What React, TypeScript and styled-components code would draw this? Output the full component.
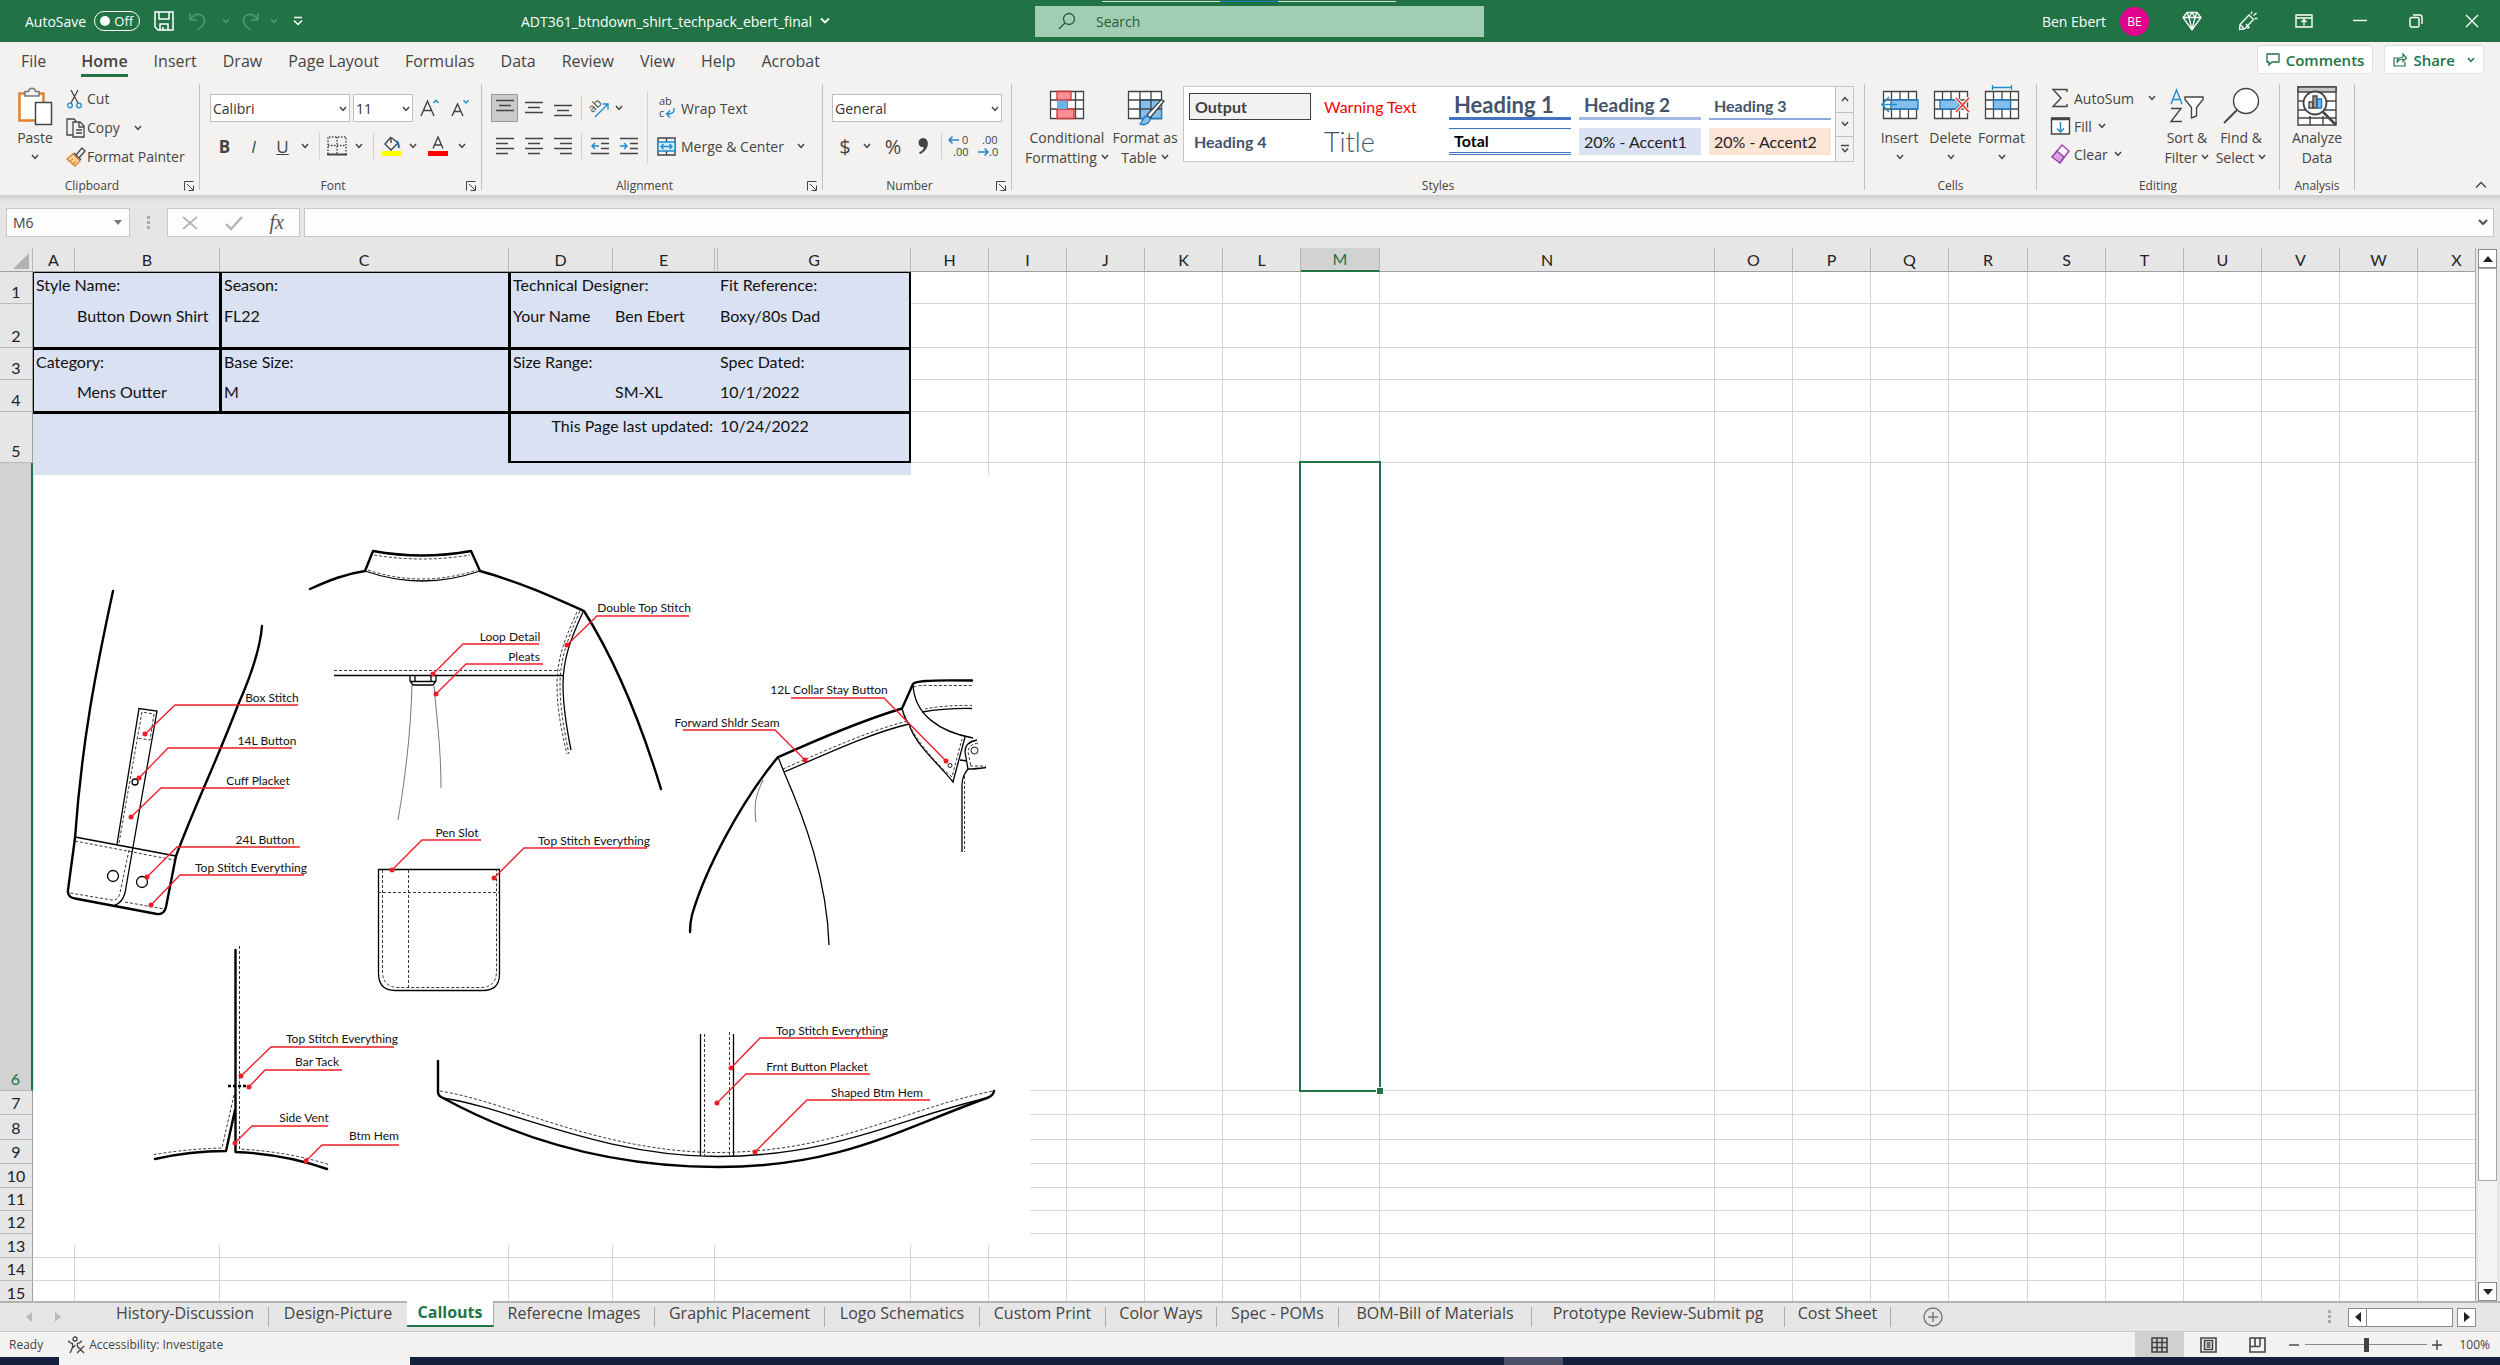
import React from "react";
import styled, { createGlobalStyle, css } from "styled-components";

const GREEN = "#217346";
const UI = '"Open Sans", "Noto Sans", sans-serif';
const CELL = 'Lato, "Open Sans", sans-serif';

const Global = createGlobalStyle`
  * { box-sizing: border-box; }
  body { margin: 0; font-family: ${UI}; font-size: 14px; color: #444; background: #e6e6e6; overflow: hidden; }
  button, input, select { font: inherit; color: inherit; margin: 0; }
  button { border: 0; padding: 0; background: none; cursor: pointer; }
  svg { display: block; flex: none; overflow: visible; }
`;

/* ---------- icon primitives ---------- */

type IconProps = { w?: number; h?: number; children: React.ReactNode; color?: string; sw?: number };
const Icon = ({ w = 20, h = 20, children, color = "#444", sw = 1.4 }: IconProps) => (
  <svg width={w} height={h} viewBox={`0 0 ${w} ${h}`} fill="none" stroke={color} strokeWidth={sw} aria-hidden="true">
    {children}
  </svg>
);
const Chevron = ({ up = false, color = "#444" }: { up?: boolean; color?: string }) => (
  <Icon w={8} h={6} color={color} sw={1.5}>
    <path d={up ? "M1 5l3-3.4L7 5" : "M1 1l3 3.4L7 1"} />
  </Icon>
);

/* ---------- title bar ---------- */

const AppFrame = styled.div`
  display: flex;
  flex-direction: column;
  height: 100vh;
`;
const TitleBar = styled.header`
  display: grid;
  grid-template-columns: 521px 514px 449px 1fr;
  align-items: center;
  height: 42px;
  background: ${GREEN};
  color: #fff;
`;
const QuickAccess = styled.div`
  display: flex;
  align-items: center;
  padding-left: 25px;
`;
const AutoSave = styled.label`
  display: flex;
  align-items: center;
  gap: 8px;
  margin-right: 14px;
`;
const Pill = styled.span`
  display: flex;
  align-items: center;
  justify-content: space-between;
  width: 46px;
  height: 20px;
  padding: 0 6px 0 5px;
  border: 1px solid #fff;
  border-radius: 10px;
  font-size: 13px;
`;
const Knob = styled.input`
  appearance: none;
  width: 10px;
  height: 10px;
  border-radius: 50%;
  background: #fff;
`;
const BarButton = styled.button<{ $w: number }>`
  display: flex;
  align-items: center;
  justify-content: center;
  width: ${(p) => p.$w}px;
  height: 30px;
`;
const DocTitle = styled.button`
  display: flex;
  align-items: center;
  justify-self: start;
  gap: 8px;
`;
const Search = styled.label`
  position: relative;
  display: flex;
  align-items: center;
  gap: 18px;
  height: 31px;
  padding-left: 23px;
  background: #a0cdb4;
  color: #1e5c3a;
  input {
    flex: 1;
    border: 0;
    outline: 0;
    background: none;
  }
  input::placeholder { color: #1e5c3a; opacity: 1; }
`;
const SnapHint = styled.i`
  position: absolute;
  top: -5px;
  left: 67px;
  width: 294px;
  height: 1px;
  background: linear-gradient(90deg, #cfe3d7 118px, #0b79c9 118px 176px, #cfe3d7 176px);
`;
const Account = styled.div`
  display: flex;
  align-items: center;
  justify-content: flex-end;
`;
const Avatar = styled.span`
  display: grid;
  place-items: center;
  width: 29px;
  height: 29px;
  margin: 0 14px;
  border-radius: 50%;
  background: #e3008c;
  font-size: 12px;
`;

/* ---------- ribbon ---------- */

const TabRow = styled.nav`
  display: flex;
  align-items: flex-start;
  height: 42px;
  padding: 3px 16px 0 8px;
  background: #f3f2f1;
`;
const RibbonTab = styled.button<{ $active?: boolean; $file?: boolean }>`
  height: 32px;
  margin: 0 13px;
  margin-right: ${(p) => (p.$file ? 22 : 13)}px;
  padding-top: 2px;
  font-size: 16px;
  line-height: 26px;
  border-bottom: 3px solid ${(p) => (p.$active ? GREEN : "transparent")};
  font-weight: ${(p) => (p.$active ? 600 : 400)};
`;
const Spacer = styled.span`
  flex: 1;
`;
const PillButton = styled.button`
  display: flex;
  align-items: center;
  gap: 6px;
  height: 29px;
  margin-left: 11px;
  padding: 0 8px;
  border: 1px solid #e1dfdd;
  border-radius: 3px;
  background: #fff;
  color: ${GREEN};
  font-size: 15px;
  font-weight: 600;
  svg:last-child { margin-left: 6px; }
  svg:first-child { margin-left: 0; }
`;
const Ribbon = styled.div`
  display: flex;
  height: 111px;
  background: #f3f2f1;
`;
const Group = styled.section<{ $w: number }>`
  display: flex;
  flex: none;
  flex-direction: column;
  width: ${(p) => p.$w}px;
  height: 111px;
  padding-right: 1px;
  background: linear-gradient(#c1bfbd, #c1bfbd) right top / 1px 106px no-repeat;
`;
const GroupBody = styled.div<{ $pad?: number }>`
  display: flex;
  height: 93px;
  padding-left: ${(p) => p.$pad ?? 0}px;
`;
const GroupFoot = styled.div`
  display: flex;
  align-items: center;
  height: 18px;
  font-size: 12px;
  line-height: 16px;
  h2 {
    flex: 1;
    margin: 0;
    font: inherit;
    text-align: center;
  }
  button {
    width: 12px;
    margin-right: 3px;
  }
`;
const BigButton = styled.button<{ $w: number }>`
  display: grid;
  grid-template-rows: 43px 20px 20px;
  justify-items: center;
  align-items: center;
  align-content: start;
  width: ${(p) => p.$w}px;
  white-space: nowrap;
  span {
    display: flex;
    align-items: center;
    gap: 4px;
  }
  > svg:first-child { align-self: start; }
`;
const List = styled.div<{ $w: number; $row: number }>`
  display: grid;
  grid-auto-rows: ${(p) => p.$row}px;
  width: ${(p) => p.$w}px;
`;
const ListButton = styled.button<{ $gap?: number; $slot?: number }>`
  display: grid;
  grid-template-columns: ${(p) => p.$slot ?? 21}px auto auto 1fr;
  align-items: center;
  justify-items: start;
  white-space: nowrap;
  svg + span { margin-right: ${(p) => p.$gap ?? 6}px; }
`;
const Rows = styled.div`
  display: flex;
  flex-direction: column;
  gap: 10px;
  padding-top: 10px;
`;
const Row = styled.div`
  display: flex;
  align-items: center;
  height: 28px;
`;
const Tool = styled.button<{ $w: number; $on?: boolean; $big?: boolean }>`
  display: flex;
  align-items: center;
  justify-content: center;
  width: ${(p) => p.$w}px;
  height: 28px;
  font-size: ${(p) => (p.$big ? 20 : 17)}px;
  ${(p) =>
    p.$on &&
    css`
      background: #cdcbc9;
      border: 1px solid #9a9896;
    `}
`;
const Rule = styled.i<{ $w: number }>`
  width: ${(p) => p.$w}px;
  height: 26px;
  background: linear-gradient(#d2d0ce, #d2d0ce) center / 1px 100% no-repeat;
`;
const LongRule = styled.i`
  width: 1px;
  height: 72px;
  margin: 7px 9px 0 4px;
  background: #d2d0ce;
`;
const TextTool = styled.button`
  display: flex;
  align-items: center;
  gap: 5px;
  height: 28px;
  white-space: nowrap;
  svg:last-child:not(:first-child) { margin-left: 8px; }
`;
const SelectBox = styled.span<{ $w: number }>`
  position: relative;
  width: ${(p) => p.$w}px;
  height: 28px;
  margin-right: 3px;
  select {
    appearance: none;
    width: 100%;
    height: 100%;
    padding: 0 2px;
    border: 1px solid #c1bfbd;
    background: #fff;
    color: #333;
  }
  svg {
    position: absolute;
    right: 3px;
    top: 12px;
  }
`;

const Gallery = styled.div`
  display: grid;
  grid-template-columns: 651px 18px;
  height: 76px;
  margin-top: 2px;
  border: 1px solid #c8c6c4;
  background: #fff;
`;
const StyleGrid = styled.div`
  display: grid;
  grid-template-columns: repeat(5, 122px);
  grid-template-rows: 27px 27px;
  gap: 8px;
  padding: 6px 5px;
`;
type SwatchProps = { $size?: number; $color?: string; $weight?: number; $bg?: string; $edge?: string };
const Swatch = styled.button<SwatchProps>`
  padding: 0 5px;
  text-align: left;
  line-height: 20px;
  white-space: nowrap;
  font-family: ${CELL};
  font-size: ${(p) => p.$size ?? 16}px;
  font-weight: ${(p) => p.$weight ?? 400};
  color: ${(p) => p.$color ?? "#222"};
  background: ${(p) => p.$bg ?? "none"};
  ${(p) => p.$edge};
`;
const GalleryScroll = styled.div`
  display: grid;
  grid-template-rows: 1fr 1fr 1fr;
  button {
    display: grid;
    place-items: center;
    border-left: 1px solid #c1bfbd;
    background: #f3f2f1;
  }
  button + button { border-top: 1px solid #c1bfbd; }
`;
const Collapse = styled.button`
  align-self: flex-end;
  margin: 0 13px 6px auto;
`;

/* ---------- formula bar ---------- */

const FormulaRow = styled.div`
  display: flex;
  height: 53px;
  padding: 13px 6px 11px;
  background: linear-gradient(#cfcdcb, #e6e6e6 7px);
`;
const NameBox = styled.div`
  display: flex;
  align-items: center;
  width: 124px;
  padding-right: 7px;
  border: 1px solid #c6c6c6;
  background: #fdfdfd;
  input {
    flex: 1;
    min-width: 0;
    padding: 0 6px;
    border: 0;
    background: none;
  }
`;
const Grip = styled.i`
  align-self: center;
  width: 3px;
  height: 14px;
  margin: 0 17px;
  background: repeating-linear-gradient(#aaa 0 3px, transparent 3px 5px);
`;
const FormulaTools = styled.div`
  display: flex;
  align-items: center;
  justify-content: space-between;
  width: 133px;
  margin-right: 4px;
  padding: 0 15px 0 14px;
  border: 1px solid #c6c6c6;
  background: #fdfdfd;
`;
const Fx = styled.span`
  font: italic 20px "Liberation Serif", serif;
  color: #555;
`;
const FormulaInput = styled.div`
  display: flex;
  flex: 1;
  align-items: center;
  padding-right: 5px;
  border: 1px solid #c6c6c6;
  background: #fdfdfd;
  input {
    flex: 1;
    border: 0;
    background: none;
  }
`;

/* ---------- sheet ---------- */

const SheetArea = styled.main`
  display: flex;
  flex: 1;
  min-height: 0;
  border-bottom: 2px solid #b2b2b2;
`;
const GridPane = styled.div`
  position: relative;
  flex: 1;
  min-width: 0;
  overflow: hidden;
  border-right: 1px solid #ababab;
  background: #fff;
`;
const Sheet = styled.table`
  width: 2496px;
  table-layout: fixed;
  border-collapse: separate;
  border-spacing: 0;
  font-family: ${CELL};
  font-size: 16px;
  line-height: 24px;
  color: #111;
`;
const ColHead = styled.th<{ $sel?: boolean }>`
  height: 24px;
  padding: 0;
  font-weight: 400;
  line-height: 20px;
  color: ${(p) => (p.$sel ? GREEN : "#222")};
  background: ${(p) => (p.$sel ? "#d2d2d2" : "#e6e6e6")};
  border-right: 1px solid #b8b8b8;
  border-bottom: ${(p) => (p.$sel ? `2px solid ${GREEN}` : "1px solid #9f9f9f")};
`;
const RowHead = styled.th<{ $sel?: boolean }>`
  padding: 0;
  vertical-align: bottom;
  font-weight: 400;
  line-height: 22px;
  color: ${(p) => (p.$sel ? GREEN : "#222")};
  background: ${(p) => (p.$sel ? "#d2d2d2" : "#e6e6e6")};
  border-bottom: 1px solid #b8b8b8;
  border-right: ${(p) => (p.$sel ? `2px solid ${GREEN}` : "1px solid #9f9f9f")};
`;
const Line = styled.tr<{ $h: number }>`
  height: ${(p) => p.$h}px;
`;
/* Heavy rules straddle the cell boundary: 1px on the leading cell, 2px on the following one.
   Edge letters: lower case for those shared rules, upper case for the outer frame. */
type CellProps = { $fill?: boolean; $b?: string; $right?: boolean; $plain?: boolean };
const Cell = styled.td<CellProps>`
  padding: 0 2px;
  vertical-align: top;
  white-space: nowrap;
  text-align: ${(p) => (p.$right ? "right" : "left")};
  border: 0 solid #000;
  ${(p) =>
    p.$fill
      ? css`background: #d9e1f2;`
      : css`border-color: #d6d6d6; border-bottom-width: 1px; border-right-width: ${p.$plain ? 0 : 1}px;`}
  ${(p) => p.$b?.includes("t") && "border-top-width: 2px;"}
  ${(p) => p.$b?.includes("T") && "border-top-width: 1px;"}
  ${(p) => p.$b?.includes("b") && "border-bottom-width: 1px;"}
  ${(p) => p.$b?.includes("B") && "border-bottom-width: 2px;"}
  ${(p) => p.$b?.includes("r") && "border-right-width: 1px;"}
  ${(p) => p.$b?.includes("R") && "border-right-width: 2px;"}
  ${(p) => p.$b?.includes("l") && "border-left-width: 2px;"}
  ${(p) => p.$b?.includes("L") && "border-left-width: 1px;"}
`;
const Selected = styled(Cell)`
  position: relative;
  &::before {
    content: "";
    position: absolute;
    inset: -2px -2px -2px -2px;
    border: 2px solid ${GREEN};
  }
  &::after {
    content: "";
    position: absolute;
    right: -4px;
    bottom: -4px;
    width: 6px;
    height: 6px;
    background: ${GREEN};
    border: solid #fff;
    border-width: 1px 0 0 1px;
  }
`;
const Sketch = styled.svg`
  position: absolute;
  left: 34px;
  top: 227px;
  background: #fff;
`;
const Leader = styled.g`
  polyline { fill: none; stroke: #ee1c25; stroke-width: 1.3; }
  circle { fill: #ee1c25; stroke: none; }
  text { font-family: ${CELL}; font-size: 12px; fill: #111; stroke: none; }
`;

const VScroll = styled.div`
  display: flex;
  flex-direction: column;
  width: 24px;
  padding: 1px 3px 0 2px;
  background: #e6e6e6;
`;
const ScrollButton = styled.button`
  display: grid;
  place-items: center;
  width: 19px;
  height: 19px;
  border: 1px solid #8a8a8a;
  background: #fff;
`;
const VTrack = styled.div`
  flex: 1;
  background: #f3f3f3;
`;
const VThumb = styled.div`
  height: 90%;
  border: 1px solid #a6a6a6;
  background: #fff;
`;

/* ---------- sheet tabs and status ---------- */

const TabStrip = styled.div`
  display: flex;
  align-items: center;
  height: 28px;
  background: #e6e6e6;
`;
const TabNav = styled.div`
  display: flex;
  align-self: stretch;
  align-items: center;
  gap: 23px;
  width: 102px;
  padding-left: 26px;
`;
const SheetTab = styled.button<{ $w: number; $active?: boolean }>`
  flex: none;
  width: ${(p) => p.$w}px;
  height: 20px;
  font-size: 16px;
  line-height: 12px;
  padding-bottom: 8px;
  white-space: nowrap;
  border-right: 1px solid #ababab;
  ${(p) =>
    p.$active &&
    css`
      align-self: flex-start;
      height: 26px;
      margin: -2px 0 0 -1px;
      padding-bottom: 2px;
      background: #fff;
      color: ${GREEN};
      font-weight: 700;
      border-bottom: 2px solid ${GREEN};
    `}
`;
const AddSheet = styled.button`
  margin-left: 32px;
`;
const HScroll = styled.div`
  display: flex;
  align-items: center;
  margin-right: 24px;
`;
const HThumb = styled.div`
  width: 86px;
  height: 19px;
  margin-right: 4px;
  border: 1px solid #8a8a8a;
  border-left: 0;
  background: #fff;
`;
const Status = styled.footer`
  display: flex;
  align-items: center;
  height: 26px;
  padding-left: 9px;
  border-top: 1px solid #c8c8c8;
  background: #f3f2f1;
  font-size: 12px;
`;
const Access = styled.button`
  display: flex;
  align-items: center;
  gap: 4px;
  margin-left: 24px;
`;
const ViewButton = styled.button<{ $on?: boolean }>`
  display: grid;
  place-items: center;
  width: 49px;
  height: 25px;
  background: ${(p) => (p.$on ? "#d2d0ce" : "none")};
`;
const ZoomOut = styled.button`
  margin-left: 6px;
`;
const Zoom = styled.input`
  appearance: none;
  width: 122px;
  height: 15px;
  background: linear-gradient(#8a8886, #8a8886) center / 100% 1px no-repeat;
  && { margin: 0 5px; }
  &::-webkit-slider-thumb {
    appearance: none;
    width: 5px;
    height: 14px;
    background: #444;
  }
`;
const ZoomValue = styled.output`
  width: 58px;
  padding: 0 10px 0 12px;
  text-align: right;
`;
const Taskbar = styled.div`
  height: 8px;
  background: linear-gradient(90deg, transparent 59px, #f3f3f3 59px 410px, transparent 410px 1504px, #4b5068 1504px 1563px, transparent 1563px), #141f3d;
`;

/* ---------- drawing ---------- */

const CALLOUTS: [string, number, number, number, number, number, number, number][] = [
  // label, dot x, dot y, elbow x, line y, line end, text centre, baseline
  ["Box Stitch", 145, 734, 175, 705, 298, 272, 702],
  ["14L Button", 139, 778, 168, 748, 292, 267, 745],
  ["Cuff Placket", 131, 817, 161, 788, 284, 258, 785],
  ["24L Button", 147, 877, 177, 847, 300, 265, 844],
  ["Top Stitch Everything", 151, 905, 180, 875, 304, 251, 872],
  ["Loop Detail", 433, 674, 463, 644, 539, 510, 641],
  ["Pleats", 436, 694, 466, 664, 543, 524, 661],
  ["Double Top Stitch", 567, 645, 597, 616, 689, 644, 612],
  ["Pen Slot", 392, 870, 422, 840, 481, 457, 837],
  ["Top Stitch Everything", 494, 878, 524, 848, 647, 594, 845],
  ["12L Collar Stay Button", 946, 761, 884, 698, 791, 829, 694],
  ["Forward Shldr Seam", 805, 760, 775, 730, 683, 727, 727],
  ["Top Stitch Everything", 241, 1076, 271, 1047, 394, 342, 1043],
  ["Bar Tack", 249, 1087, 265, 1070, 342, 317, 1066],
  ["Side Vent", 235, 1143, 252, 1126, 328, 304, 1122],
  ["Btm Hem", 306, 1161, 322, 1145, 399, 374, 1140],
  ["Top Stitch Everything", 731, 1068, 760, 1038, 884, 832, 1035],
  ["Frnt Button Placket", 717, 1103, 746, 1074, 870, 817, 1071],
  ["Shaped Btm Hem", 755, 1152, 807, 1100, 930, 877, 1097],
];

const ShirtSketch = () => (
  <Sketch width="996" height="770" viewBox="34 475 996 770" role="img" aria-label="Shirt construction callouts">
    {/* heavy outlines */}
    <g fill="none" stroke="#000" strokeWidth="2.4" strokeLinejoin="round" strokeLinecap="round">
      <path d="M113 591C96 670 82 740 75 838L68 890Q67 897 75 898.500L157 914Q164 915 166 907L176 856" />
      <path d="M262 626C260 650 250 678 238 705C215 765 195 805 176 856" />
      <path d="M310 589C330 580 345 574 365 571L373 551Q422 560 471 551L480 571C520 582 555 598 584 611C615 660 640 720 661 789" />
      <path d="M972 680.500Q935 680 925 681Q914 682 913 684L902 708.500C850 724 800 748 778 757C740 803 705 870 692 915Q690 923 690 932" />
      <path d="M235.500 950V1152Q285 1154 327 1169M235 1110L226 1151Q190 1151 155 1159" />
      <path d="M438 1061V1092Q438 1096 443 1098C500 1129 590 1167 718 1167C840 1167 900 1129 987 1098Q993 1096 994 1091" />
    </g>
    {/* seams */}
    <g fill="none" stroke="#000" strokeWidth="1.300">
      <path d="M75 837L176 856M117 844L139 708.500L157 711L133 847L125 893Q122 903 115 905" />
      <circle cx="113" cy="876" r="5.500" />
      <circle cx="142" cy="882" r="5.500" />
      <circle cx="135" cy="782" r="3" />
      <path d="M365 571Q422 591 480 571M334 675.500H563" />
      <path d="M583 612C570 640 563 660 563 685C563 705 566 725 571 750" />
      <path d="M410 675V681L413 685H433L436 681V675M415 675V681M431 675V681M410 681.500H436" />
      <path d="M378.500 869.500H499.500V974Q499.500 990.500 483 990.500H395Q378.500 990.500 378.500 973Z" />
      <path d="M778 757L784 772C805 820 827 880 829 945M784 772C820 757 870 733 909 724" />
      <path d="M902 708.500Q905 720 909 724C915 745 940 765 953 782L965 737M913 684C914 715 940 732 973 738" />
      <path d="M922 712Q945 708 972 708.500M960 760L967 761M977 740Q965 742 965 752L968 769Q975 769 986 767.500" />
      <path d="M968 769Q962 776 962 785V852" />
      <circle cx="974.500" cy="750.500" r="3.500" strokeWidth="0.900" />
      <circle cx="950" cy="765.500" r="2" strokeWidth="0.900" />
      <path d="M443 1098C510 1108 600 1156 718 1156.500C836 1156 900 1118 987 1098M700.500 1034V1156M733.500 1034V1156" />
    </g>
    {/* fabric folds */}
    <g fill="none" stroke="#777" strokeWidth="1">
      <path d="M412 685C411 730 405 780 398 820M434 686C437 720 441 750 441 788M763 780C755 797 754 805 756 822" />
    </g>
    {/* stitching */}
    <g fill="none" stroke="#222" strokeWidth="0.900" strokeDasharray="3 2">
      <path d="M75 841L174 860M119 843L142 712L154 714L150 740L137 738M129 850L120 893Q118 901 112 900L70 893M125 902L164 909" />
      <path d="M374 555Q422 563 470 555M368 570Q422 588 477 570M334 670.500H560" />
      <path d="M580 611C567 640 560 660 560 685C560 705 563 725 569 754M577 612C564 640 557 660 557 685C557 705 560 725 567 754" />
      <path d="M382.500 870V972Q383 986.500 397 987.500H482Q496 986.500 496.500 972V870M378 892.500H499M408.500 870V990" />
      <path d="M783 769C820 753 870 730 908 721M903 711C912 735 930 758 952 777L962 739M925 709Q945 705 972 705.500M914 687Q918 685 930 685.500H972" />
      <path d="M964.500 776V852M970 766H986M978 743Q968 745 968 752L971 766" />
      <path d="M239.500 946V1149Q290 1152 330 1165M234 1095L222 1148Q185 1149 152 1155" />
      <path d="M440 1091C510 1102 600 1152 718 1152.500C836 1152 900 1110 993 1091M704.500 1034V1156M729.500 1032V1156" />
    </g>
    <path d="M228 1086H248" stroke="#000" strokeWidth="2.400" strokeDasharray="3 2" />
    {CALLOUTS.map(([label, dx, dy, ex, ly, end, tx, ty], i) => (
      <Leader key={i}>
        <polyline points={`${dx},${dy} ${ex},${ly} ${end},${ly}`} />
        <circle cx={dx} cy={dy} r="2.500" />
        <text x={tx} y={ty} textAnchor="middle">{label}</text>
      </Leader>
    ))}
  </Sketch>
);

/* ---------- ribbon icons ---------- */

const Launcher = () => (
  <button aria-label="More options">
    <Icon w={10} h={10} sw={1}><path d="M.500 9.500V.500H9.500M3 3l6 6M9.500 4.500v5h-5" /></Icon>
  </button>
);
const AlignLines = ({ widths, top = 0 }: { widths: number[]; top?: number }) => (
  <Icon w={18} h={18} sw={1.5}>
    {widths.map((n, i) => <path key={i} d={`M${(18 - n) / 2} ${top + 1.500 + i * 5}h${n}`} />)}
  </Icon>
);
const TextLines = ({ side }: { side: "l" | "c" | "r" }) => (
  <Icon w={18} h={18} sw={1.5}>
    {[18, 12, 18, 12].map((n, i) => {
      const x = side === "l" ? 0 : side === "c" ? (18 - n) / 2 : 18 - n;
      return <path key={i} d={`M${x} ${1.500 + i * 5}h${n}`} />;
    })}
  </Icon>
);
const Indent = ({ right = false }: { right?: boolean }) => (
  <Icon w={18} h={18} sw={1.4}>
    <path d="M0 1.500h18M10 6.500h8M10 11.500h8M0 16.500h18" />
    <path stroke="#1e8bcd" d={right ? "M0 9h7M4 6l3 3-3 3" : "M1 9h7M4 6L1 9l3 3"} />
  </Icon>
);
const DecimalIcon = ({ more = false }: { more?: boolean }) => (
  <svg width="22" height="26" viewBox="0 0 22 26" aria-hidden="true">
    <g fontFamily="Open Sans" fontSize="11" fill="#444">
      <text x={more ? 14 : 5} y="11">{more ? "0" : ".00"}</text>
      <text x={more ? 5 : 12} y="23">{more ? ".00" : ".0"}</text>
    </g>
    <path fill="none" stroke="#1e8bcd" strokeWidth="1.500" d={more ? "M1 7h10M4.500 3.500L1 7l3.500 3.500" : "M1 19h10M7.500 15.500L11 19l-3.500 3.500"} />
  </svg>
);
const TableBase = ({ children, w = 38 }: { children?: React.ReactNode; w?: number }) => (
  <Icon w={w} h={36} sw={1.3}>
    <path fill="#fff" d="M2.500 7.500h33v27h-33z" />
    <path d="M2.500 16h33M2.500 25h33M10.500 7.500v27M19 7.500v27M27.500 7.500v27" />
    {children}
  </Icon>
);

const COLS: [string, number][] = [
  ["A", 42], ["B", 145], ["C", 289], ["D", 104], ["E", 102], ["F", 3], ["G", 193],
  ["H", 78], ["I", 78], ["J", 78], ["K", 78], ["L", 78], ["M", 79], ["N", 335],
  ["O", 78], ["P", 78], ["Q", 78], ["R", 79], ["S", 78], ["T", 78], ["U", 78], ["V", 78], ["W", 78], ["X", 78],
];
const blank = COLS.slice(7).map(([c]) => c);
const Rest = ({ row }: { row: number }) => (
  <>{blank.map((c) => (row === 6 && c === "M" ? <Selected key={c} /> : <Cell key={c} />))}</>
);
const PLAIN_ROWS: [number, number][] = [[7, 24], [8, 25], [9, 24], [10, 24], [11, 23], [12, 23], [13, 24], [14, 23], [15, 24]];

const SHEETS: [string, number][] = [
  ["History-Discussion", 167], ["Design-Picture", 139], ["Callouts", 87], ["Referecne Images", 161],
  ["Graphic Placement", 170], ["Logo Schematics", 155], ["Custom Print", 126], ["Color Ways", 111],
  ["Spec - POMs", 122], ["BOM-Bill of Materials", 193], ["Prototype Review-Submit pg", 253], ["Cost Sheet", 106],
];

export default function App() {
  return (
    <AppFrame>
      <Global />
      <TitleBar>
        <QuickAccess>
          <AutoSave>
            AutoSave
            <Pill><Knob type="checkbox" />Off</Pill>
          </AutoSave>
          <BarButton $w={20} aria-label="Save">
            <Icon color="#fff" sw={1.5}><path d="M1 1h18v18H4l-3-3zM5 1v7h10V1M6 19v-6h8v6M9 19v-3" /></Icon>
          </BarButton>
          <BarButton $w={48} aria-label="Undo">
            <Icon color="#4f9a70" sw={1.6}><path d="M2 2v7h7M2.500 8.500C5 4 9 2.500 13 4c5 2.500 4 8 1 11l-5 4" /></Icon>
          </BarButton>
          <Chevron color="#4f9a70" />
          <BarButton $w={40} aria-label="Redo">
            <Icon color="#4f9a70" sw={1.6}><path d="M18 2v7h-7M17.500 8.500C15 4 11 2.500 7 4c-5 2.500-4 8-1 11l5 4" /></Icon>
          </BarButton>
          <Chevron color="#4f9a70" />
          <BarButton $w={40} aria-label="Customize Quick Access Toolbar">
            <Icon w={10} h={10} color="#fff" sw={1.5}><path d="M1 1.500h8M1 4.500l4 4 4-4" /></Icon>
          </BarButton>
        </QuickAccess>
        <DocTitle>ADT361_btndown_shirt_techpack_ebert_final <Icon w={10} h={8} color="#fff" sw={1.8}><path d="M1 1.500l4 4 4-4" /></Icon></DocTitle>
        <Search>
          <SnapHint />
          <Icon w={18} h={18} color="#1e5c3a" sw={1.3}><circle cx="11" cy="7" r="5.500" /><path d="M7 11L1 17" /></Icon>
          <input type="search" placeholder="Search" aria-label="Search" />
        </Search>
        <Account>
          Ben Ebert
          <Avatar>BE</Avatar>
          <BarButton $w={57} aria-label="Premium"><Icon color="#fff" sw={1.3}><path d="M5 1.500h10l4 5L10 19 1 6.500zM1 6.500h18M5 1.500l2 5 3 12 3-12 2-5M7 6.500l3-5 3 5" /></Icon></BarButton>
          <BarButton $w={56} aria-label="What's new"><Icon color="#fff" sw={1.3}><path d="M1.500 18.500l.5-5L11 4l4.500 4.500-9 9.500zM2 13.500l4.500 4.500M8 13l3 3.500-2 1M13 3l1-2.500M15.500 4.500L18.500 2M16.500 7.500h3" /></Icon></BarButton>
          <BarButton $w={56} aria-label="Ribbon display options"><Icon w={18} h={14} color="#fff" sw={1.4}><path d="M1 1h16v12H1zM1 4h16M9 11.500V6M6.500 8L9 5.500 11.500 8" /></Icon></BarButton>
          <BarButton $w={56} aria-label="Minimize"><Icon w={14} h={14} color="#fff"><path d="M0 6.500h14" /></Icon></BarButton>
          <BarButton $w={56} aria-label="Restore"><Icon w={14} h={14} color="#fff"><rect x="1" y="3.500" width="9" height="9.500" rx="1.500" /><path d="M4 1h6.500Q13 1 13 3.500V10" /></Icon></BarButton>
          <BarButton $w={56} aria-label="Close"><Icon w={14} h={14} color="#fff"><path d="M1 1l12 12M13 1L1 13" /></Icon></BarButton>
        </Account>
      </TitleBar>

      <TabRow>
        {["File", "Home", "Insert", "Draw", "Page Layout", "Formulas", "Data", "Review", "View", "Help", "Acrobat"].map((t) => (
          <RibbonTab key={t} $active={t === "Home"} $file={t === "File"}>{t}</RibbonTab>
        ))}
        <Spacer />
        <PillButton><Icon w={14} h={13} color={GREEN} sw={1.3}><path d="M1 1h12v8H6l-3 3V9H1z" /></Icon>Comments</PillButton>
        <PillButton>
          <Icon w={14} h={14} color={GREEN} sw={1.2}><path d="M5 5H1v8h11V9M4 10c0-4 2-6 6-6V1l3.500 4L10 8.500V6C7 6 5 7 4 10z" /></Icon>
          Share <Chevron color={GREEN} />
        </PillButton>
      </TabRow>

      <Ribbon>
        <Group $w={200}>
          <GroupBody $pad={4}>
            <BigButton $w={62}>
              <Icon w={36} h={42} sw={1.5}>
                <path stroke="#e0812b" strokeWidth="2.500" fill="#fff" d="M2.500 9.500h24v27h-24z" />
                <path fill="#f3f2f1" stroke="#777" d="M8 12V7.500h3.500C12 3 18 3 18.500 7.500H22V12z" />
                <path fill="#fff" d="M18.500 18.500h16v22h-16z" />
              </Icon>
              <span>Paste</span><Chevron />
            </BigButton>
            <List $w={130} $row={29}>
              <ListButton>
                <Icon w={18} h={20} sw={1.3}><path d="M5 1l7 13M12 1L5 14" /><g stroke="#1e8bcd"><circle cx="4" cy="16.500" r="2.300" /><circle cx="13" cy="16.500" r="2.300" /></g></Icon>
                <span>Cut</span>
              </ListButton>
              <ListButton $gap={14}>
                <Icon w={20} h={20} sw={1.3}><path d="M7 17H1V1h7l2 2M7 4h7l4 4v11H7zM13 4v5h5M10 12h6M10 15h6" /></Icon>
                <span>Copy</span><Chevron />
              </ListButton>
              <ListButton>
                <Icon w={20} h={20} sw={1.3}><path d="M10 8l6-7 3 3-6 7zM8 6l7 7" /><path stroke="#e0812b" fill="#fbd9a8" d="M7 7l7 7-5 5-8-7z" /><path stroke="#e0812b" d="M4 14l3-2M7 17l3-3" /></Icon>
                <span>Format Painter</span>
              </ListButton>
            </List>
          </GroupBody>
          <GroupFoot><h2>Clipboard</h2><Launcher /></GroupFoot>
        </Group>

        <Group $w={282}>
          <GroupBody $pad={10}>
            <Rows>
              <Row>
                <SelectBox $w={140}><select aria-label="Font"><option>Calibri</option></select><Chevron /></SelectBox>
                <SelectBox $w={60}><select aria-label="Font size"><option>11</option></select><Chevron /></SelectBox>
                <Tool $w={28} aria-label="Increase font size"><Icon w={20} h={20}><path d="M1 18L7.500 3 14 18M3.500 12.500h8" /><path stroke="#1e8bcd" d="M13.500 5L16 2.300 18.500 5" /></Icon></Tool>
                <Tool $w={32} aria-label="Decrease font size"><Icon w={20} h={20}><path d="M2 18L7.500 6 13 18M4 13.500h7" /><path stroke="#1e8bcd" d="M13.500 2.300L16 5l2.500-2.700" /></Icon></Tool>
              </Row>
              <Row>
                <Tool $w={29}><b>B</b></Tool>
                <Tool $w={29}><i>I</i></Tool>
                <Tool $w={29}><u>U</u></Tool>
                <Tool $w={16} aria-label="Underline options"><Chevron /></Tool>
                <Rule $w={12} />
                <Tool $w={24} aria-label="Borders"><Icon w={20} h={20}><path strokeDasharray="1.500 1.500" d="M1 18V1h18v17M10 1v17M1 9.500h18" /><path strokeWidth="2" d="M0 18.500h20" /></Icon></Tool>
                <Tool $w={20} aria-label="Border options"><Chevron /></Tool>
                <Rule $w={9} />
                <Tool $w={28} aria-label="Fill color"><Icon w={20} h={20}><path d="M9 1L3 8l6 6 7-7-6-5M9 1v6" /><path stroke="#1e6bb0" strokeWidth="2" d="M15 5q2 3 2 7" /><path fill="#ff0" stroke="none" d="M0 15h20v5H0z" /></Icon></Tool>
                <Tool $w={14} aria-label="Fill options"><Chevron /></Tool>
                <Tool $w={36} aria-label="Font color"><Icon w={20} h={20}><path d="M5 12.500L10 1l5 11.500M6.500 9h7" /><path fill="red" stroke="none" d="M0 15h20v5H0z" /></Icon></Tool>
                <Tool $w={12} aria-label="Font color options"><Chevron /></Tool>
              </Row>
            </Rows>
          </GroupBody>
          <GroupFoot><h2>Font</h2><Launcher /></GroupFoot>
        </Group>

        <Group $w={341}>
          <GroupBody $pad={9}>
            <Rows>
              <Row>
                <Tool $w={27} $on aria-label="Top align"><AlignLines widths={[18, 12, 18]} /></Tool>
                <Tool $w={31} aria-label="Middle align"><AlignLines widths={[18, 12, 18]} top={2} /></Tool>
                <Tool $w={28} aria-label="Bottom align"><AlignLines widths={[18, 12, 18]} top={5} /></Tool>
                <Rule $w={8} />
                <Tool $w={28} aria-label="Orientation">
                  <Icon w={22} h={22}><g stroke="none" fill="#444" transform="rotate(-45 8 10)"><text x="1" y="12" fontSize="12" fontFamily="Open Sans">ab</text></g><path stroke="#1e8bcd" d="M7 20L20 7M14.500 7H20v5.500" /></Icon>
                </Tool>
                <Tool $w={12} aria-label="Orientation options"><Chevron /></Tool>
              </Row>
              <Row>
                <Tool $w={27} aria-label="Align left"><TextLines side="l" /></Tool>
                <Tool $w={31} aria-label="Center"><TextLines side="c" /></Tool>
                <Tool $w={28} aria-label="Align right"><TextLines side="r" /></Tool>
                <Rule $w={8} />
                <Tool $w={29} aria-label="Decrease indent"><Indent /></Tool>
                <Tool $w={29} aria-label="Increase indent"><Indent right /></Tool>
              </Row>
            </Rows>
            <LongRule />
            <Rows>
              <TextTool>
                <Icon w={19} h={24}><g stroke="none" fill="#444" fontSize="11" fontFamily="Open Sans"><text x="2" y="9">ab</text><text x="2" y="21">c</text></g><path stroke="#1e8bcd" d="M17 12v2q0 4-7 4M13 14.500L9.500 18l3.500 3.500" /></Icon>
                Wrap Text
              </TextTool>
              <TextTool>
                <Icon w={19} h={19}><path d="M1 1h17v17H1zM9.500 1v4M9.500 14v4" /><path stroke="#1e8bcd" fill="#d7ebf8" d="M1 5h17v9H1z" /><path stroke="#1e8bcd" d="M4 9.500h11M6.500 7L4 9.500 6.500 12M12.500 7L15 9.500 12.500 12" /></Icon>
                Merge &amp; Center <Chevron />
              </TextTool>
            </Rows>
          </GroupBody>
          <GroupFoot><h2>Alignment</h2><Launcher /></GroupFoot>
        </Group>

        <Group $w={189}>
          <GroupBody $pad={9}>
            <Rows>
              <Row><SelectBox $w={170}><select aria-label="Number format"><option>General</option></select><Chevron /></SelectBox></Row>
              <Row>
                <Tool $w={26} $big>$</Tool>
                <Tool $w={18} aria-label="Currency options"><Chevron /></Tool>
                <Tool $w={34} $big>%</Tool>
                <Tool $w={26} aria-label="Comma style"><Icon w={12} h={18}><path fill="#444" stroke="none" d="M6 1c7 0 7 12-3 16l-1-1.500c4-2 5-4 4.500-5.500C0 11 0 1 6 1z" /></Icon></Tool>
                <Rule $w={10} />
                <Tool $w={26} aria-label="Increase decimal"><DecimalIcon more /></Tool>
                <Tool $w={32} aria-label="Decrease decimal"><DecimalIcon /></Tool>
              </Row>
            </Rows>
          </GroupBody>
          <GroupFoot><h2>Number</h2><Launcher /></GroupFoot>
        </Group>

        <Group $w={853}>
          <GroupBody $pad={13}>
            <BigButton $w={82}>
              <TableBase><path stroke="#d13438" fill="#ff8f96" d="M9 7.500h14V16H9zM9 25h17v9.500H9z" /><path stroke="none" fill="#6cb2e8" d="M9 16.500h10V25H9z" /></TableBase>
              <span>Conditional</span><span>Formatting <Chevron /></span>
            </BigButton>
            <BigButton $w={76}>
              <Icon w={38} h={42} sw={1.3}>
                <path fill="#fff" d="M2.500 7.500h33v27h-33z" /><path fill="#83beec" stroke="#1f77c0" d="M14 16h21.500v18.500H14z" />
                <path d="M2.500 16h33M2.500 25h33M14 7.500v27M25 7.500v27" />
                <path fill="#fff" stroke="#444" d="M38 17L24 34l-3-3L35 16z" /><path fill="#83beec" stroke="#1f77c0" d="M21 32c4 1 4 5 1 7s-6 2-8 1c3-2 2-7 7-8z" />
              </Icon>
              <span>Format as</span><span>Table <Chevron /></span>
            </BigButton>
            <Gallery>
              <StyleGrid>
                <Swatch $weight={700} $bg="#f2f2f2" $edge="border: 1px solid #3f3f3f" $color="#3f3f3f">Output</Swatch>
                <Swatch $color="#ff0000">Warning Text</Swatch>
                <Swatch $weight={700} $size={22} $color="#44546a" $edge="border-bottom: 3px solid #4472c4">Heading 1</Swatch>
                <Swatch $weight={700} $size={19} $color="#44546a" $edge="border-bottom: 3px solid #a2b8e1">Heading 2</Swatch>
                <Swatch $weight={700} $color="#44546a" $edge="border-bottom: 2px solid #8ea9db">Heading 3</Swatch>
                <Swatch $weight={700} $color="#44546a">Heading 4</Swatch>
                <Swatch $weight={300} $size={27} $color="#44546a">Title</Swatch>
                <Swatch $weight={700} $color="#000" $edge="border-top: 1px solid #4472c4; border-bottom: 3px double #4472c4">Total</Swatch>
                <Swatch $bg="#d9e1f2">20% - Accent1</Swatch>
                <Swatch $bg="#fce4d6">20% - Accent2</Swatch>
              </StyleGrid>
              <GalleryScroll>
                <button aria-label="Previous styles"><Chevron up /></button>
                <button aria-label="Next styles"><Chevron /></button>
                <button aria-label="All styles"><Icon w={10} h={10}><path d="M1 1.500h8M2 4.500l3 3.300 3-3.300" /></Icon></button>
              </GalleryScroll>
            </Gallery>
          </GroupBody>
          <GroupFoot><h2>Styles</h2></GroupFoot>
        </Group>

        <Group $w={172}>
          <GroupBody $pad={9}>
            <BigButton $w={51}>
              <TableBase><path stroke="#1f77c0" fill="#83beec" d="M10 16h27v9H10z" /><path stroke="#1e8bcd" strokeWidth="1.600" d="M1 20.500h15M8 13L1 20.500 8 28" /></TableBase>
              <span>Insert</span><Chevron />
            </BigButton>
            <BigButton $w={51}>
              <TableBase><path stroke="#1f77c0" fill="#83beec" d="M8 16h16l4 4.500-4 4.500H8z" /><path stroke="#f3f2f1" strokeWidth="4" d="M24 14l13 14M37 14L24 28" /><path stroke="#e8403a" strokeWidth="1.800" d="M24 14l13 14M37 14L24 28" /></TableBase>
              <span>Delete</span><Chevron />
            </BigButton>
            <BigButton $w={51}>
              <TableBase><path stroke="#1f77c0" fill="#83beec" d="M10.500 16h17v9h-17z" /><path stroke="#1e8bcd" d="M9.500 3.500h19M9.500 1v5M28.500 1v5" /></TableBase>
              <span>Format</span><Chevron />
            </BigButton>
          </GroupBody>
          <GroupFoot><h2>Cells</h2></GroupFoot>
        </Group>

        <Group $w={243}>
          <GroupBody $pad={12}>
            <List $w={111} $row={28}>
              <ListButton $slot={25} $gap={14}><Icon w={22} h={20}><path d="M18 4V1.500H4L12 10 4 18.500h14V16" /></Icon><span>AutoSum</span><Chevron /></ListButton>
              <ListButton $slot={25}><Icon w={22} h={20}><path fill="#fff" d="M2.500 2h18v16h-18z" /><path strokeWidth="2.500" d="M2.500 3h18" /><path stroke="#1e8bcd" d="M11.500 6v10M8 12.500l3.500 3.500 3.500-3.500" /></Icon><span>Fill</span><Chevron /></ListButton>
              <ListButton $slot={25}><Icon w={22} h={20} color="#9b3fb0"><path fill="#fff" d="M13 1l7 6-9 12-7-7z" /><path fill="#d9a3e3" d="M8 7l7 6-4 6-8-6z" /></Icon><span>Clear</span><Chevron /></ListButton>
            </List>
            <BigButton $w={54}>
              <Icon w={36} h={40}>
                <path stroke="#1e8bcd" d="M2 20L7.500 6 13 20M4 15.500h7" /><path d="M2 24.500h10L2 37.500h11" />
                <path fill="#fff" d="M16 13h18v2.500l-6.500 8V32l-5 2V23.500L16 15.500z" />
              </Icon>
              <span>Sort &amp;</span><span>Filter <Chevron /></span>
            </BigButton>
            <BigButton $w={54}>
              <Icon w={38} h={40}><circle fill="#fff" cx="24" cy="17" r="12.500" /><path strokeWidth="1.800" d="M15 26L2 39" /></Icon>
              <span>Find &amp;</span><span>Select <Chevron /></span>
            </BigButton>
          </GroupBody>
          <GroupFoot><h2>Editing</h2></GroupFoot>
        </Group>

        <Group $w={75}>
          <GroupBody>
            <BigButton $w={74}>
              <Icon w={40} h={42}>
                <g transform="translate(0 2)">
                  <path fill="#fff" d="M1 1h38v38H1z" /><path fill="#c8c6c4" d="M1 1h38v5H1z" /><path d="M1 15h38M1 24h38M1 32h38M13 30v9M26 30v9" />
                  <circle fill="#fff" cx="18" cy="17" r="11.500" strokeWidth="1.800" /><path strokeWidth="2.500" d="M26 26l13 13" />
                  <path fill="#c8c6c4" d="M12 16h4v6h-4z" /><path d="M16 10h4v12h-4z" fill="#999" /><path stroke="#1f77c0" fill="#83beec" d="M20.500 13h4v9h-4z" />
                </g>
              </Icon>
              <span>Analyze</span><span>Data</span>
            </BigButton>
          </GroupBody>
          <GroupFoot><h2>Analysis</h2></GroupFoot>
        </Group>
        <Collapse aria-label="Collapse ribbon"><Icon w={12} h={8}><path d="M1 6.500l5-5 5 5" /></Icon></Collapse>
      </Ribbon>

      <FormulaRow>
        <NameBox><input aria-label="Name box" defaultValue="M6" /><Icon w={8} h={6}><path fill="#777" stroke="none" d="M0 0h8L4 5z" /></Icon></NameBox>
        <Grip />
        <FormulaTools>
          <button aria-label="Cancel"><Icon w={16} h={14} color="#b5b5b5" sw={1.8}><path d="M1 1l14 12M15 1L1 13" /></Icon></button>
          <button aria-label="Enter"><Icon w={18} h={14} color="#b5b5b5" sw={2.4}><path d="M1 8l5 5L17 1" /></Icon></button>
          <button aria-label="Insert function"><Fx>fx</Fx></button>
        </FormulaTools>
        <FormulaInput><input aria-label="Formula" /><Icon w={10} h={7} color="#555" sw={2.2}><path d="M1 1l4 4 4-4" /></Icon></FormulaInput>
      </FormulaRow>

      <SheetArea>
        <GridPane>
          <Sheet>
            <colgroup>
              <col style={{ width: 33 }} />
              {COLS.map(([c, w]) => <col key={c} style={{ width: w }} />)}
            </colgroup>
            <thead>
              <tr>
                <ColHead aria-label="Select all"><Icon w={31} h={22}><path fill="#b2b2b2" stroke="none" d="M29 4v16H13z" /></Icon></ColHead>
                {COLS.map(([c]) => <ColHead key={c} $sel={c === "M"}>{c === "F" ? null : c}</ColHead>)}
              </tr>
            </thead>
            <tbody>
              <Line $h={32}>
                <RowHead>1</RowHead>
                <Cell $fill $b="TLr" colSpan={2}>Style Name:</Cell><Cell $fill $b="Tlr">Season:</Cell>
                <Cell $fill $b="Tl" colSpan={2}>Technical Designer:</Cell><Cell $fill $b="T" /><Cell $fill $b="TR">Fit Reference:</Cell><Rest row={1} />
              </Line>
              <Line $h={44}>
                <RowHead>2</RowHead>
                <Cell $fill $b="bL" /><Cell $fill $b="br">Button Down Shirt</Cell><Cell $fill $b="blr">FL22</Cell>
                <Cell $fill $b="bl">Your Name</Cell><Cell $fill $b="b">Ben Ebert</Cell><Cell $fill $b="b" /><Cell $fill $b="bR">Boxy/80s Dad</Cell><Rest row={2} />
              </Line>
              <Line $h={32}>
                <RowHead>3</RowHead>
                <Cell $fill $b="tLr" colSpan={2}>Category:</Cell><Cell $fill $b="tlr">Base Size:</Cell>
                <Cell $fill $b="tl" colSpan={2}>Size Range:</Cell><Cell $fill $b="t" /><Cell $fill $b="tR">Spec Dated:</Cell><Rest row={3} />
              </Line>
              <Line $h={32}>
                <RowHead>4</RowHead>
                <Cell $fill $b="bL" /><Cell $fill $b="br">Mens Outter</Cell><Cell $fill $b="blr">M</Cell>
                <Cell $fill $b="bl" /><Cell $fill $b="b">SM-XL</Cell><Cell $fill $b="b" /><Cell $fill $b="bR">10/1/2022</Cell><Rest row={4} />
              </Line>
              <Line $h={51}>
                <RowHead>5</RowHead>
                <Cell $fill $b="t" /><Cell $fill $b="t" /><Cell $fill $b="tr" />
                <Cell $fill $b="tBl" $right colSpan={2}>This Page last updated:</Cell><Cell $fill $b="tB" /><Cell $fill $b="tBR">10/24/2022</Cell><Rest row={5} />
              </Line>
              <Line $h={628}>
                <RowHead $sel>6</RowHead>
                {COLS.slice(0, 7).map(([c]) => <Cell key={c} $fill />)}<Rest row={6} />
              </Line>
              {PLAIN_ROWS.map(([n, h]) => (
                <Line key={n} $h={h}>
                  <RowHead>{n}</RowHead>
                  {COLS.slice(0, 7).map(([c]) => <Cell key={c} $plain={c === "F"} />)}<Rest row={n} />
                </Line>
              ))}
            </tbody>
          </Sheet>
          <ShirtSketch />
        </GridPane>
        <VScroll>
          <ScrollButton aria-label="Scroll up"><Icon w={10} h={6}><path fill="#222" stroke="none" d="M0 6h10L5 0z" /></Icon></ScrollButton>
          <VTrack><VThumb /></VTrack>
          <ScrollButton aria-label="Scroll down"><Icon w={10} h={6}><path fill="#222" stroke="none" d="M0 0h10L5 6z" /></Icon></ScrollButton>
        </VScroll>
      </SheetArea>

      <TabStrip>
        <TabNav>
          <Icon w={6} h={10}><path fill="#bbb" stroke="none" d="M6 0v10L0 5z" /></Icon>
          <Icon w={6} h={10}><path fill="#bbb" stroke="none" d="M0 0v10l6-5z" /></Icon>
        </TabNav>
        {SHEETS.map(([n, w]) => <SheetTab key={n} $w={w} $active={n === "Callouts"}>{n}</SheetTab>)}
        <AddSheet aria-label="New sheet"><Icon color="#777"><circle cx="10" cy="10" r="9" /><path d="M10 5v10M5 10h10" /></Icon></AddSheet>
        <Spacer />
        <Grip />
        <HScroll>
          <ScrollButton aria-label="Scroll left"><Icon w={6} h={10}><path fill="#222" stroke="none" d="M6 0v10L0 5z" /></Icon></ScrollButton>
          <HThumb />
          <ScrollButton aria-label="Scroll right"><Icon w={6} h={10}><path fill="#222" stroke="none" d="M0 0v10l6-5z" /></Icon></ScrollButton>
        </HScroll>
      </TabStrip>

      <Status>
        Ready
        <Access>
          <Icon w={18} h={18} sw={1.3}><circle cx="8" cy="3" r="2" /><path d="M1.500 4.500q0 2 4 3v4L3 17M14.500 4.500q0 2-4 3v3M5.500 12l3-3M10 10l7 7M17 10l-7 7" /></Icon>
          Accessibility: Investigate
        </Access>
        <Spacer />
        <ViewButton $on aria-label="Normal view"><Icon w={17} h={16} sw={1.6}><path d="M1 1h15v14H1zM1 5.500h15M1 10.500h15M6 1v14M11 1v14" /></Icon></ViewButton>
        <ViewButton aria-label="Page layout view"><Icon w={17} h={16} sw={1.6}><path d="M1 1h15v14H1zM4.500 3.500h8v9h-8zM6.500 6h4M6.500 8h4M6.500 10h4" /></Icon></ViewButton>
        <ViewButton aria-label="Page break view"><Icon w={17} h={16} sw={1.6}><path d="M1 1h15v14H1zM6 1v8M11 1v8M1 9.500h10" /></Icon></ViewButton>
        <ZoomOut aria-label="Zoom out"><Icon w={12} h={10}><path d="M1 5h10" /></Icon></ZoomOut>
        <Zoom type="range" min={0} max={200} defaultValue={100} aria-label="Zoom" />
        <button aria-label="Zoom in"><Icon w={10} h={10}><path d="M0 5h10M5 0v10" /></Icon></button>
        <ZoomValue>100%</ZoomValue>
      </Status>
      <Taskbar />
    </AppFrame>
  );
}
